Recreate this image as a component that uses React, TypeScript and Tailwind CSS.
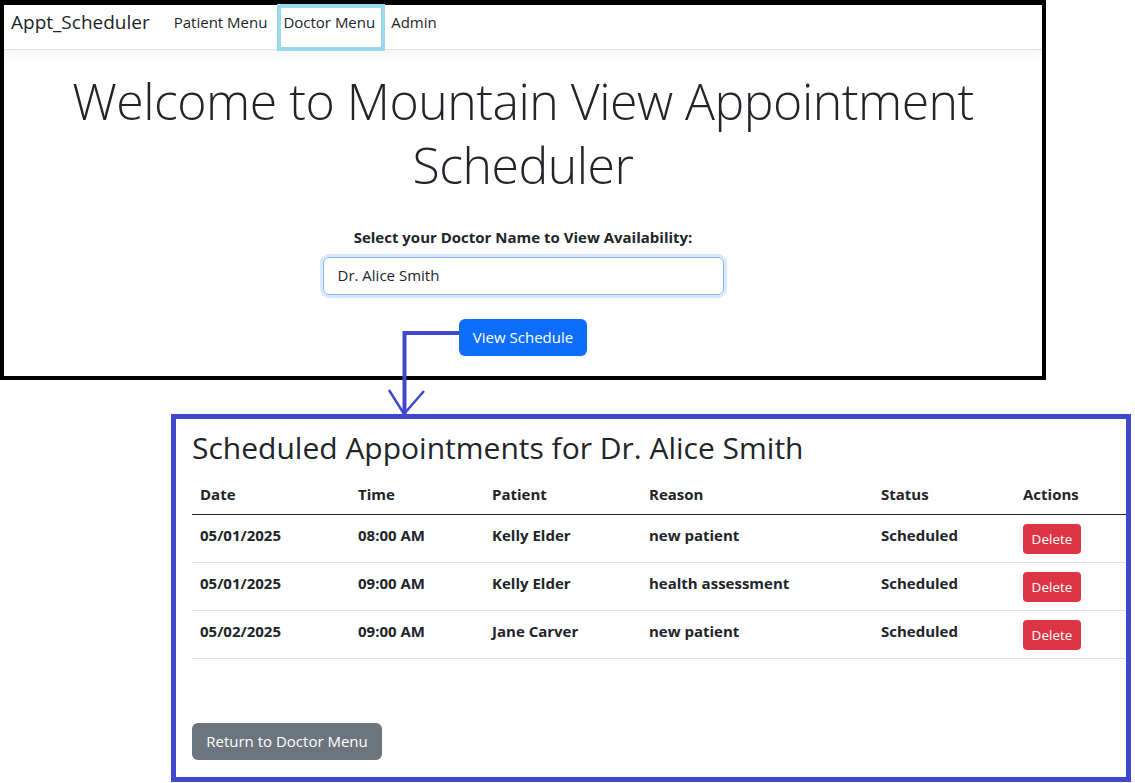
const rows = [
  { date: "05/01/2025", time: "08:00 AM", patient: "Kelly Elder", reason: "new patient", status: "Scheduled" },
  { date: "05/01/2025", time: "09:00 AM", patient: "Kelly Elder", reason: "health assessment", status: "Scheduled" },
  { date: "05/02/2025", time: "09:00 AM", patient: "Jane Carver", reason: "new patient", status: "Scheduled" },
];

const cols = ["w-[158px]", "w-[134px]", "w-[157px]", "w-[232px]", "w-[142px]", "w-[137px]"];

export default function App() {
  return (
    <div className="relative w-[1135px] h-[783px] overflow-hidden bg-white font-['Open_Sans',sans-serif] text-[#212529]">
      {/* top screenshot: doctor lookup */}
      <div className="w-[1046px] h-[380px] border-4 border-t-[5px] border-black bg-white flex flex-col">
        <nav className="h-[45px] flex items-start pt-[4px] px-[7px] border-b border-[#dee2e6] shadow-[0_4px_10px_rgba(0,0,0,0.05)]">
          <span className="text-[19px] leading-[26px] mr-4">Appt_Scheduler</span>
          <a className="px-2 text-[15px] leading-[26px]">Patient Menu</a>
          <a className="px-2 text-[15px] leading-[26px]">Doctor Menu</a>
          <a className="px-2 text-[15px] leading-[26px]">Admin</a>
        </nav>
        <div className="flex flex-col items-center pt-[19px]">
          <h1 className="text-[50px] tracking-[-0.5px] font-light leading-[64px] text-center w-[930px]">
            Welcome to Mountain View Appointment Scheduler
          </h1>
          <label className="mt-[29px] text-[15px] font-bold">Select your Doctor Name to View Availability:</label>
          <div className="mt-[8px] w-[401px] h-[38px] rounded-md border border-[#86b7fe] shadow-[0_0_0_3px_rgba(13,110,253,0.15)] flex items-center px-[14px] text-[15px]">
            Dr. Alice Smith
          </div>
          <button className="mt-[24px] w-[128px] h-[37px] rounded-md bg-[#0d6efd] text-white text-[15px]">View Schedule</button>
        </div>
      </div>

      {/* bottom screenshot: schedule */}
      <div className="ml-[171px] mt-[34px] w-[960px] h-[368px] border-[5px] border-[#3f48cc] bg-white overflow-hidden">
        <div className="pl-4 pt-[10px] flex flex-col h-full">
          <h2 className="text-[30px] font-medium leading-[38px] mb-2">Scheduled Appointments for Dr. Alice Smith</h2>
          <table className="w-[960px] text-[15px] font-bold border-collapse table-fixed">
            <thead>
              <tr className="border-b border-[#212529] h-[39px]">
                {["Date", "Time", "Patient", "Reason", "Status", "Actions"].map((h, i) => (
                  <th key={h} className={`${cols[i]} text-left px-2 align-middle`}>{h}</th>
                ))}
              </tr>
            </thead>
            <tbody>
              {rows.map((r, i) => (
                <tr key={i} className="border-b border-[#dee2e6] h-[48px] align-top leading-[24px]">
                  <td className="px-2 pt-2">{r.date}</td>
                  <td className="px-2 pt-2">{r.time}</td>
                  <td className="px-2 pt-2">{r.patient}</td>
                  <td className="px-2 pt-2">{r.reason}</td>
                  <td className="px-2 pt-2">{r.status}</td>
                  <td className="px-2 pt-[9px]">
                    <button className="w-[58px] h-[30px] rounded bg-[#dc3545] text-white text-[13.5px] font-normal">Delete</button>
                  </td>
                </tr>
              ))}
            </tbody>
          </table>
          <button className="mt-[64px] w-[190px] h-[37px] rounded-md bg-[#6c757d] text-white text-[15px]">Return to Doctor Menu</button>
        </div>
      </div>

      {/* annotations */}
      <div className="absolute left-[277px] top-[4px] w-[108px] h-[47px] border-4 border-[#99d9ea]" />
      <svg className="absolute left-0 top-0 pointer-events-none" width="1135" height="783">
        <polyline points="459,333 404.5,333 404.5,414" fill="none" stroke="#3f48cc" strokeWidth="4" />
        <path d="M389,390 L404,414 L424,391" fill="none" stroke="#3f48cc" strokeWidth="2.5" />
      </svg>
    </div>
  );
}
